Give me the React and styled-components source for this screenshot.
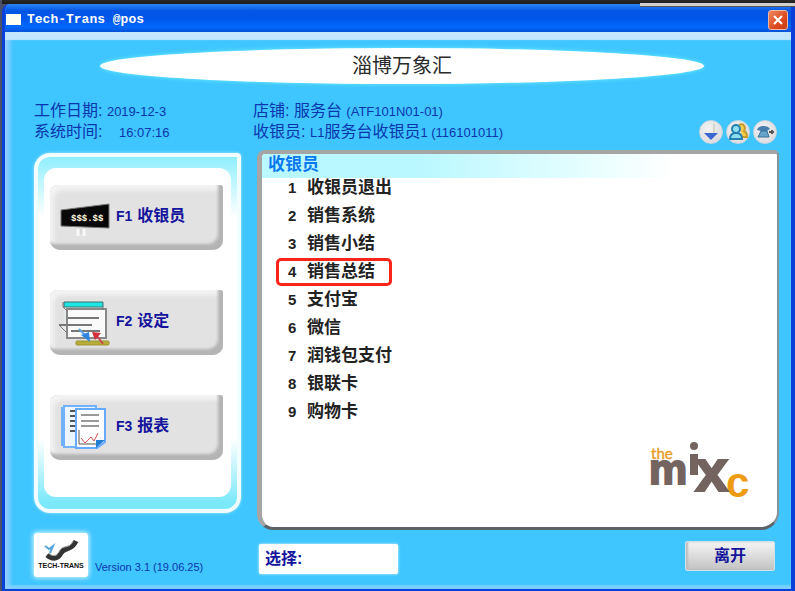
import React from "react";
import styled, { createGlobalStyle } from "styled-components";

const GlobalStyle = createGlobalStyle`
  * { box-sizing: border-box; }
  body {
    margin: 0;
    font-family: "Liberation Sans", "Noto Sans CJK SC", sans-serif;
    font-size: 16px;
  }
  button, input { font: inherit; color: inherit; }
`;

const Desktop = styled.div`
  display: flex;
  flex-direction: column;
  min-height: 100vh;
  padding: 0 0 0 2px;
  background: #4a5068;
`;

const DesktopEdge = styled.div`
  height: 4px;
  flex: none;
  background: linear-gradient(#2a2a28, #1b1b1c);
`;

const EdgeStrip = styled.div`
  position: absolute;
  top: 3px;
  right: 0;
  width: 155px;
  height: 4px;
  background: #d2d0cc;
  border-bottom: 1px solid #555;
`;

const Window = styled.main`
  flex: 1;
  display: flex;
  flex-direction: column;
  border: solid #0a3fd8;
  border-width: 0 4px 2px 3px;
  border-radius: 8px 0 0 0;
  background: #3fc5ff;
  overflow: hidden;
`;

const TitleBar = styled.header`
  display: flex;
  align-items: center;
  height: 28px;
  flex: none;
  padding: 3px 0 0 1px;
  background: linear-gradient(#2b87f5, #0355e4 25%, #0057ea 55%, #0368ff 80%, #0252d8);
`;

const AppMark = styled.span`
  width: 15px;
  height: 11px;
  margin-right: 6px;
  background: #fdfdf2;
`;

const WindowTitle = styled.h1`
  flex: 1;
  margin: 0;
  font: bold 13px/16px "Liberation Mono", monospace;
  color: #fff;
`;

const CloseButton = styled.button`
  display: grid;
  place-items: center;
  width: 20px;
  height: 20px;
  margin-right: 3px;
  padding: 0;
  border: 1px solid #f0b9a6;
  border-radius: 3px;
  background: linear-gradient(135deg, #ef8a63, #dc4b20 60%, #c93c12);
`;

const Body = styled.div`
  flex: 1;
  display: flex;
  flex-direction: column;
  padding: 16px 12px 12px 29px;
  box-shadow: inset 0 8px 1px #c3e6ff, inset 5px 0 4px #8fcdff, inset 0 -4px 1px #6fd0ff;
`;

const Banner = styled.h2`
  margin: 0 75px 16px 66px;
  height: 36px;
  border-radius: 50%;
  background: #fff;
  box-shadow: 0 0 4px #6ff0ff;
  text-align: center;
  font-size: 20px;
  line-height: 36px;
  font-weight: 400;
  color: #2b2b2b;
`;

const Columns = styled.div`
  flex: 1;
  display: grid;
  grid-template-columns: 207px minmax(0, 1fr);
  column-gap: 16px;
`;

const Column = styled.div`
  display: flex;
  flex-direction: column;
`;

const InfoBar = styled.div`
  display: flex;
  justify-content: space-between;
  align-items: flex-end;
  height: ${(p) => p.$height};
  flex: none;
`;

const InfoLines = styled.div`
  align-self: flex-start;
  margin-left: ${(p) => p.$shift || "0"};
  line-height: 21px;
  color: #0b35ae;
  white-space: nowrap;
`;

const InfoLine = styled.div`
  height: 21px;
`;

const Small = styled.span`
  margin-left: ${(p) => p.$gap || "0"};
  font-size: 13px;
`;

const Tools = styled.nav`
  display: flex;
  gap: 3px;
  margin: 0 2px 6px 0;
`;

const ToolButton = styled.button`
  display: grid;
  place-items: center;
  width: 24px;
  height: 24px;
  padding: 0;
  border: 1px solid #c9d6de;
  border-radius: 50%;
  background: radial-gradient(circle at 40% 35%, #f3f3f3, #d6d6dc);
`;

const SidePanel = styled.nav`
  flex: 1;
  display: flex;
  padding: 11px 6px 12px;
  border: 4px solid #f2fdff;
  border-radius: 16px 4px 16px 16px;
  background: linear-gradient(#90efff, #fff 17%, #fff 80%, #7ce9fb 98%);
  box-shadow: 0 0 3px #b7efff;
`;

const SideList = styled.div`
  flex: 1;
  display: flex;
  flex-direction: column;
  gap: 40px;
  padding: 17px 8px 0 6px;
  border-radius: 12px;
  background: #fff;
`;

const FunctionButton = styled.button`
  display: flex;
  align-items: center;
  gap: 5px;
  height: 65px;
  padding: 0 0 4px 8px;
  border: 0;
  border-radius: 8px 3px 10px 10px;
  background: #e2e2e2;
  box-shadow: inset -5px -6px 3px #b4b4b4, inset 4px 5px 4px #f4f4f4, inset 0 0 3px 1px #c4c4c4;
  font-weight: 700;
  color: #14149c;
  text-align: left;
`;

const FunctionLabel = styled.span`
  padding-bottom: 4px;
`;

const Key = styled.span`
  font-size: 14px;
  margin-right: 5px;
`;

const Brand = styled.div`
  display: flex;
  align-items: flex-end;
  gap: 7px;
  margin-top: 20px;
`;

const BrandCard = styled.div`
  width: 54px;
  height: 44px;
  border-radius: 3px;
  background: #fff;
  box-shadow: 0 0 5px 1px #d9f7ff;
`;

const Version = styled.span`
  font-size: 11px;
  line-height: 20px;
  color: #0b35ae;
  white-space: nowrap;
`;

const ListPanel = styled.section`
  flex: 1;
  display: flex;
  flex-direction: column;
  border: solid;
  border-width: 4px 2px 3px 5px;
  border-color: #a5a5a5 #8a9194 #5c6265 #a5a5a5;
  border-radius: 8px 5px 18px 16px;
  background: #fff;
  overflow: hidden;
`;

const ListTitle = styled.h3`
  margin: 0;
  padding-left: 6px;
  height: 24px;
  font-size: 17px;
  line-height: 22px;
  font-weight: 700;
  color: #0878f0;
  background: linear-gradient(90deg, #b9f8ff 30%, #e9feff 65%, #fff 80%);
`;

const MenuList = styled.ol`
  margin: -4px 0 0;
  padding: 0 0 0 14px;
  list-style: none;
`;

const MenuButton = styled.button`
  display: flex;
  align-items: center;
  height: 28px;
  padding: 0 14px 0 9px;
  border: ${(p) => (p.$selected ? "3px solid #fb2419" : "3px solid transparent")};
  border-radius: 5px;
  background: none;
  font-size: 17px;
  line-height: 20px;
  font-weight: 700;
  color: #222;
  white-space: nowrap;
`;

const Digit = styled.span`
  width: 19px;
  font-size: 15px;
  text-align: left;
`;

const MallLogo = styled.svg`
  width: 100px;
  height: 62px;
  margin: auto 26px 24px auto;
  overflow: visible;
  font-family: "Liberation Sans", sans-serif;
`;

const Footer = styled.footer`
  display: flex;
  justify-content: space-between;
  align-items: flex-start;
  height: 47px;
  flex: none;
  padding: 11px 4px 0 2px;
`;

const Choice = styled.label`
  display: flex;
  align-items: center;
  width: 139px;
  height: 30px;
  margin-top: 3px;
  padding: 0 6px 4px;
  border-radius: 2px;
  background: #fff;
  box-shadow: 0 0 3px #d9f7ff;
  font-weight: 700;
  color: #14149c;
  white-space: nowrap;
`;

const ChoiceInput = styled.input`
  flex: 1;
  min-width: 0;
  border: 0;
  outline: 0;
  background: transparent;
`;

const LeaveButton = styled.button`
  width: 90px;
  height: 30px;
  padding: 0 0 4px;
  border: 1px solid #cfe2ea;
  border-radius: 2px;
  background: linear-gradient(#f4f4f4, #dcdcdc 50%, #c2c2c2);
  box-shadow: inset 2px 0 2px #bcbcbc;
  font-weight: 700;
  color: #14149c;
`;

const PriceIcon = () => (
  <svg width="53" height="40" viewBox="0 0 53 40" aria-hidden="true">
    <path d="M3 14 51 8V32L3 30Z" fill="#080808" stroke="#777" />
    <text x="13" y="25" fill="#fffbe0" fontFamily="Liberation Mono, monospace" fontWeight="bold" fontSize="9">$$$.$$</text>
    <path d="M20 33v7M26 33v7" stroke="#f8f8f8" strokeWidth="3" />
    <path d="M23 33v5" stroke="#ccc" />
  </svg>
);

const SetupIcon = () => (
  <svg width="53" height="50" viewBox="0 0 53 50" aria-hidden="true">
    <path d="M5 6h41v7h3v29H9V37L1 29l5-1V13z" fill="#e6e9e9" />
    <path d="M6 6h39v5H6z" fill="#1ee6e2" stroke="#397070" />
    <path d="M9 13h39v29H9z" fill="#fafafa" stroke="#888" strokeWidth="2" />
    <path d="M5 6v5l4 4M45 11v3M1 29l8 8" fill="none" stroke="#777" />
    <path d="M10 22h31M1 29h33M13 35h29" stroke="#777" strokeWidth="2" />
    <rect x="18" y="45" width="33" height="4" rx="1" fill="#b7ad38" stroke="#9c942c" />
    <path d="M21 33 27 39" stroke="#5aa2ea" strokeWidth="2" />
    <path d="m23 39 8-3 1 10z" fill="#3285df" />
    <path d="M39 40 45 48" stroke="#c84850" strokeWidth="2" />
    <path d="m34 36 9 1-6 7z" fill="#d22f38" />
  </svg>
);

const ReportIcon = () => (
  <svg width="53" height="46" viewBox="0 0 53 46" aria-hidden="true">
    <path d="M6 3h32v41H6z" fill="#eaf5ff" stroke="#72b1ff" strokeWidth="2" />
    <path d="M5 4v39" stroke="#72b1ff" strokeWidth="4" />
    <path d="M12 8h6M12 13h6M12 18h6M12 23h6M12 28h6" stroke="#555" strokeWidth="2" />
    <path d="M18 6h29v33l-8 6H18z" fill="#fff" stroke="#65aaff" strokeWidth="2" />
    <path d="M23 12h18M23 18h18M23 23h18" stroke="#999" strokeWidth="2" />
    <path d="M21 27v14h20" fill="none" stroke="#555" strokeWidth="1" />
    <path d="m23 35 4 5 6-6 3 4 4-8" fill="none" stroke="#dc4d50" strokeWidth="1" />
    <path d="M38 37h9l-9 8z" fill="#227fd5" />
  </svg>
);

const functions = [
  { key: "F1", label: "收银员", Icon: PriceIcon },
  { key: "F2", label: "设定", Icon: SetupIcon },
  { key: "F3", label: "报表", Icon: ReportIcon },
];

const menu = ["收银员退出", "销售系统", "销售小结", "销售总结", "支付宝", "微信", "润钱包支付", "银联卡", "购物卡"];

export default function App() {
  return (
    <Desktop>
      <GlobalStyle />
      <DesktopEdge />
      <EdgeStrip />
      <Window>
        <TitleBar>
          <AppMark />
          <WindowTitle>Tech-Trans @pos</WindowTitle>
          <CloseButton aria-label="关闭">
            <svg width="12" height="12" viewBox="0 0 12 12"><path d="m2 2 8 8M10 2 2 10" stroke="#fff" strokeWidth="2" /></svg>
          </CloseButton>
        </TitleBar>
        <Body>
          <Banner>淄博万象汇</Banner>
          <Columns>
            <Column>
              <InfoBar $height="53px">
                <InfoLines>
                  <InfoLine>工作日期: <Small>2019-12-3</Small></InfoLine>
                  <InfoLine>系统时间: <Small $gap="12px">16:07:16</Small></InfoLine>
                </InfoLines>
              </InfoBar>
              <SidePanel>
                <SideList>
                  {functions.map(({ key, label, Icon }) => (
                    <FunctionButton key={key}>
                      <Icon />
                      <FunctionLabel><Key>{key}</Key>{label}</FunctionLabel>
                    </FunctionButton>
                  ))}
                </SideList>
              </SidePanel>
              <Brand>
                <BrandCard>
                  <svg width="54" height="44" viewBox="0 0 54 44" aria-hidden="true">
                    <path d="M13 22c6 5 11 4 14-2 4-7 10-1 15-12" fill="none" stroke="#333" strokeWidth="5" />
                    <path d="M14 20c6 5 10 2 12-3 4-6 9 0 13-9" fill="none" stroke="#aaa" strokeWidth="1" />
                    <path d="m11 13 4 3 4-3-3 7" fill="none" stroke="#56a5d8" strokeWidth="2" />
                    <text x="27" y="35" textAnchor="middle" fontSize="7" fontWeight="bold" fill="#111">TECH-TRANS</text>
                  </svg>
                </BrandCard>
                <Version>Version 3.1 (19.06.25)</Version>
              </Brand>
            </Column>
            <Column>
              <InfoBar $height="50px">
                <InfoLines $shift="-4px">
                  <InfoLine>店铺: 服务台 <Small>(ATF101N01-01)</Small></InfoLine>
                  <InfoLine>收银员: <Small>L1</Small>服务台收银员<Small>1 (116101011)</Small></InfoLine>
                </InfoLines>
                <Tools>
                  <ToolButton aria-label="下载">
                    <svg width="18" height="18" viewBox="0 0 18 18"><path d="M12 1v10" stroke="#bfc4a9" strokeWidth="1" /><path d="M2 10h14l-7 7z" fill="#3c67d3" /></svg>
                  </ToolButton>
                  <ToolButton aria-label="用户">
                    <svg width="20" height="18" viewBox="0 0 20 18"><path d="M11 2c5-3 7 3 5 6 2 1 3 3 3 6h-5" fill="#f2cf50" stroke="#c79b29" strokeWidth="2" /><circle cx="8" cy="6" r="4" fill="#8be1f0" stroke="#267fae" strokeWidth="2" /><path d="M2 16c0-5 3-6 6-6s6 1 6 6z" fill="#8be1f0" stroke="#267fae" strokeWidth="2" /></svg>
                  </ToolButton>
                  <ToolButton aria-label="电话">
                    <svg width="20" height="16" viewBox="0 0 20 16"><path d="M2 6c1-5 11-5 13-1l-3 2H6z" fill="#467fac" /><path d="m6 7-3 6h11l-2-6z" fill="#67a4c9" stroke="#397096" /><path d="M14 8h5M17 6v4" stroke="#555" strokeWidth="2" /></svg>
                  </ToolButton>
                </Tools>
              </InfoBar>
              <ListPanel>
                <ListTitle>收银员</ListTitle>
                <MenuList>
                  {menu.map((label, i) => (
                    <li key={label}>
                      <MenuButton $selected={i === 3}><Digit>{i + 1}</Digit>{label}</MenuButton>
                    </li>
                  ))}
                </MenuList>
                <MallLogo viewBox="0 0 100 62" role="img" aria-label="the mixc">
                  <text x="75" y="56" fontSize="42" fontWeight="bold" fill="#ec9b13">c</text>
                  <text x="0" y="18" fontSize="15" fill="#e89a24" stroke="#e89a24" strokeWidth="0.4" fontFamily="Lato, sans-serif">the</text>
                  <g fill="#74645f" stroke="#74645f" strokeWidth="2" fontWeight="bold">
                    <text x="-2" y="43" fontSize="43">m</text>
                    <text x="44" y="50" fontSize="60">x</text>
                  </g>
                  <path d="M39 13h8v21h-8z" fill="#74645f" />
                  <circle cx="43" cy="5" r="4" fill="#74645f" />
                </MallLogo>
              </ListPanel>
              <Footer>
                <Choice>选择:<ChoiceInput /></Choice>
                <LeaveButton>离开</LeaveButton>
              </Footer>
            </Column>
          </Columns>
        </Body>
      </Window>
    </Desktop>
  );
}
